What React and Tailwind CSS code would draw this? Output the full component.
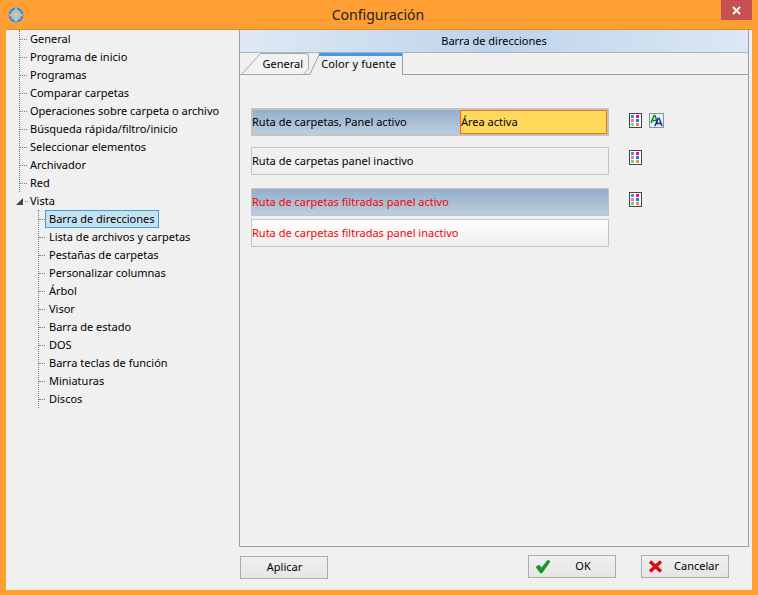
import React from 'react';

const topItems = [
  'General',
  'Programa de inicio',
  'Programas',
  'Comparar carpetas',
  'Operaciones sobre carpeta o archivo',
  'Búsqueda rápida/filtro/inicio',
  'Seleccionar elementos',
  'Archivador',
  'Red',
];

const subItems = [
  'Barra de direcciones',
  'Lista de archivos y carpetas',
  'Pestañas de carpetas',
  'Personalizar columnas',
  'Árbol',
  'Visor',
  'Barra de estado',
  'DOS',
  'Barra teclas de función',
  'Miniaturas',
  'Discos',
];

function AppIcon() {
  return (
    <svg width="16" height="16" viewBox="0 0 16 16">
      <circle cx="8" cy="8" r="7.5" fill="#3f87d6" />
      <circle cx="8" cy="8" r="5.5" fill="#8fc0ea" />
      <circle cx="8" cy="8" r="3" fill="#f2bf5a" />
      <path d="M8 1v3M8 12v3M1 8h3M12 8h3" stroke="#d8ecfa" strokeWidth="1" />
    </svg>
  );
}

function PaletteIcon() {
  return (
    <svg width="13" height="15" viewBox="0 0 13 15" className="block">
      <rect x="0.5" y="0.5" width="12" height="14" fill="#fff" stroke="#444" />
      <rect x="2" y="2" width="3" height="3" fill="#6f7fc0" />
      <rect x="7" y="2" width="3" height="3" fill="#f0108a" />
      <rect x="2" y="6" width="3" height="3" fill="#d58aa0" />
      <rect x="7" y="6" width="3" height="3" fill="#0a84f0" />
      <rect x="2" y="10" width="3" height="3" fill="#7ccf92" />
      <rect x="7" y="10" width="3" height="3" fill="#f58a3c" />
    </svg>
  );
}

function FontIcon() {
  return (
    <svg width="15" height="15" viewBox="0 0 15 15" className="block">
      <rect x="0.5" y="0.5" width="14" height="14" fill="#e6eef6" stroke="#7f97b2" />
      <path d="M2 10 L5 2.5 L6 2.5 L8.5 10 M3.2 7.5 H7.5" fill="none" stroke="#0a8a1c" strokeWidth="1.4" />
      <path d="M6 13 L9 5.5 L10.2 5.5 L13 13 M7.2 10.5 H12" fill="none" stroke="#12308c" strokeWidth="1.4" />
    </svg>
  );
}

function TreeRow({ label }) {
  return (
    <div className="flex items-center h-[18px]">
      <span className="w-[7px] border-t border-dotted border-[#777] shrink-0" />
      <span className="ml-[3px] whitespace-nowrap">{label}</span>
    </div>
  );
}

function SubRow({ label, selected }) {
  return (
    <div className="flex items-center h-[18px]">
      <span className="w-[6px] border-t border-dotted border-[#777] shrink-0" />
      {selected ? (
        <span className="h-[18px] px-[3px] flex items-center border border-[#3fa0d8] bg-[#c4e2f2] whitespace-nowrap">{label}</span>
      ) : (
        <span className="ml-[4px] whitespace-nowrap">{label}</span>
      )}
    </div>
  );
}

function ColorRow({ className, textClass, children }) {
  return (
    <div className={`w-[358px] h-[28px] border border-[#c4c4c4] flex items-center ${className}`}>
      <span className={textClass}>{children}</span>
    </div>
  );
}

function Button({ icon, label, className }) {
  return (
    <div
      className={`relative w-[88px] h-[23px] border border-[#acacac] bg-gradient-to-b from-[#f0f0f0] to-[#e5e5e5] flex items-center justify-center ${className}`}
    >
      {icon && <span className="absolute left-[6px] top-[3px]">{icon}</span>}
      {label}
    </div>
  );
}

export default function App() {
  return (
    <div
      className="w-[758px] h-[595px] bg-[#ff9f33] flex flex-col overflow-hidden text-[11px] text-black"
      style={{ fontFamily: '"Noto Sans", "Liberation Sans", sans-serif' }}
    >
      {/* Title bar */}
      <div className="h-[29px] shrink-0 relative flex items-center justify-center pr-[2px]">
        <span className="absolute left-[8px] top-[7px]"><AppIcon /></span>
        <span className="text-[14px] text-[#222]">Configuración</span>
        <div className="absolute right-[6px] top-0 w-[31px] h-[20px] bg-[#c75050] flex items-center justify-center">
          <svg width="9" height="9" viewBox="0 0 9 9">
            <path d="M1 1 L8 8 M8 1 L1 8" stroke="#fff" strokeWidth="1.8" />
          </svg>
        </div>
      </div>

      {/* Client area */}
      <div className="mx-[6px] mb-[5px] flex-1 bg-[#f0f0f0] border-t border-[#d88a30] flex flex-col min-h-0">
        <div className="flex flex-1 min-h-0">
          {/* Tree */}
          <div className="w-[233px] shrink-0 pl-[13px]">
            <div className="border-l border-dotted border-[#777] w-fit">
              {topItems.map((t) => (
                <TreeRow key={t} label={t} />
              ))}
            </div>
            <div className="flex items-center h-[18px] -ml-[3px]">
              <svg width="7" height="7" viewBox="0 0 7 7" className="shrink-0">
                <path d="M0 7 L7 7 L7 0 Z" fill="#444" />
              </svg>
              <span className="ml-[2px] w-[3px] border-t border-dotted border-[#777]" />
              <span className="ml-[2px]">Vista</span>
            </div>
            <div className="ml-[19px] border-l border-dotted border-[#777] w-fit">
              {subItems.map((t, i) => (
                <SubRow key={t} label={t} selected={i === 0} />
              ))}
            </div>
          </div>

          {/* Right panel */}
          <div className="w-[510px] border-l border-r border-b border-[#a0a0a0] flex flex-col">
            <div className="h-[23px] shrink-0 bg-gradient-to-r from-[#dfe9f5] via-[#bdd3ea] to-[#dce8f5] border-b border-[#b4b4b4] flex items-center justify-center">
              Barra de direcciones
            </div>
            <div className="h-[22px] shrink-0 border-b border-[#a0a0a0] flex items-end pl-px">
              <div className="relative w-[68px] h-[22px] -mb-px flex items-center justify-end pr-[6px]">
                <svg width="68" height="22" viewBox="0 0 68 22" className="absolute inset-0">
                  <path d="M0.5 21.5 L19.5 0.5 L65 0.5 Q67.5 0.5 67.5 3 L67.5 16 L62 21.5 Z" fill="#f2f2f2" stroke="#a8a8a8" />
                </svg>
                <span className="relative">General</span>
              </div>
              <div className="relative w-[95px] h-[22px] -mb-px -ml-px flex items-center justify-end pr-[7px]">
                <svg width="95" height="22" viewBox="0 0 95 22" className="absolute inset-0">
                  <path d="M1.5 22 L11.5 1 L94.5 1 L94.5 22" fill="#f0f0f0" stroke="#a0a0a0" />
                  <path d="M11 1.5 L94.5 1.5" stroke="#3c9bf0" strokeWidth="3" />
                </svg>
                <span className="relative tracking-[0.15px]">Color y fuente</span>
              </div>
            </div>

            <div className="flex-1 pl-[11px] pt-[33px]">
              <div className="flex items-start">
                <div className="w-[358px] h-[28px] border-2 border-[#c4c4c4] bg-gradient-to-b from-[#94afcd] to-[#bccddd] flex items-center">
                  <span className="w-[208px] -ml-px shrink-0">Ruta de carpetas, Panel activo</span>
                  <span className="w-[147px] h-[24px] border border-[#f07010] bg-[#ffd95c] flex items-center">Área activa</span>
                </div>
                <span className="ml-[20px] mt-[5px]"><PaletteIcon /></span>
                <span className="ml-[7px] mt-[5px]"><FontIcon /></span>
              </div>
              <div className="flex items-start mt-[11px]">
                <ColorRow className="bg-[#f0f0f0]" textClass="text-black">Ruta de carpetas panel inactivo</ColorRow>
                <span className="ml-[20px] mt-[3px]"><PaletteIcon /></span>
              </div>
              <div className="flex items-start mt-[13px]">
                <ColorRow className="bg-gradient-to-b from-[#94afcd] to-[#bccddd]" textClass="text-[#ff0000]">Ruta de carpetas filtradas panel activo</ColorRow>
                <span className="ml-[20px] mt-[4px]"><PaletteIcon /></span>
              </div>
              <div className="mt-[3px]">
                <ColorRow className="bg-gradient-to-b from-white to-[#efefef]" textClass="text-[#ff0000]">Ruta de carpetas filtradas panel inactivo</ColorRow>
              </div>
            </div>
          </div>
        </div>

        {/* Footer buttons */}
        <div className="h-[43px] shrink-0 flex items-start pt-[9px] pl-[234px]">
          <Button label={<span className="pl-px">Aplicar</span>} />
          <Button
            label={<span className="pl-[22px]">OK</span>}
            className="ml-[200px] -mt-px"
            icon={
              <svg width="16" height="15" viewBox="0 0 16 15" className="block">
                <path d="M1 8 L4 6 L6.5 9 L13 1 L15 2.5 L7 14 L5.5 14 Z" fill="#0d9a1e" stroke="#0a7a18" strokeWidth="0.5" />
              </svg>
            }
          />
          <Button
            label={<span className="pl-[23px]">Cancelar</span>}
            className="ml-[25px] -mt-px"
            icon={
              <svg width="15" height="13" viewBox="0 0 15 13" className="block mt-[1px]">
                <path d="M2 1.5 L13 11.5 M13 1.5 L2 11.5" stroke="#dc0a14" strokeWidth="3.4" />
              </svg>
            }
          />
        </div>
      </div>
    </div>
  );
}
